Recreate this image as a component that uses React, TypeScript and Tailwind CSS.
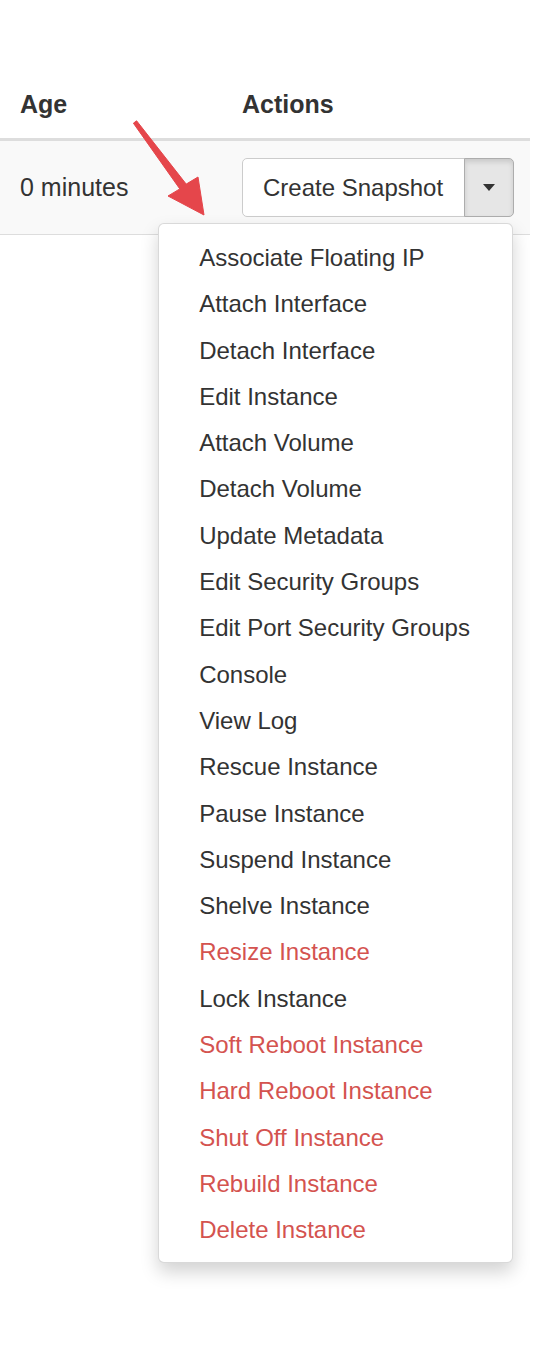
import React from 'react';

type Action = { label: string; danger?: boolean };

const actions: Action[] = [
  { label: 'Associate Floating IP' },
  { label: 'Attach Interface' },
  { label: 'Detach Interface' },
  { label: 'Edit Instance' },
  { label: 'Attach Volume' },
  { label: 'Detach Volume' },
  { label: 'Update Metadata' },
  { label: 'Edit Security Groups' },
  { label: 'Edit Port Security Groups' },
  { label: 'Console' },
  { label: 'View Log' },
  { label: 'Rescue Instance' },
  { label: 'Pause Instance' },
  { label: 'Suspend Instance' },
  { label: 'Shelve Instance' },
  { label: 'Resize Instance', danger: true },
  { label: 'Lock Instance' },
  { label: 'Soft Reboot Instance', danger: true },
  { label: 'Hard Reboot Instance', danger: true },
  { label: 'Shut Off Instance', danger: true },
  { label: 'Rebuild Instance', danger: true },
  { label: 'Delete Instance', danger: true },
];

const Arrow = () => (
  <svg
    className="absolute left-0 top-0 pointer-events-none"
    width="546"
    height="300"
    viewBox="0 0 546 300"
  >
    <polygon
      points="133.4,123.2 136.6,120.8 186.2,184.1 198,177 204,215 168,196 179.8,188.9"
      fill="#e5464b"
      stroke="#e5464b"
      strokeWidth="1"
      strokeLinejoin="round"
    />
  </svg>
);

export default function App() {
  return (
    <div
      className="relative w-[546px] h-[1346px] bg-white text-[#333] overflow-hidden"
      style={{ fontFamily: '"Liberation Sans", Arial, sans-serif' }}
    >
      <div className="pt-[70px] w-[530px]">
        {/* Header */}
        <div className="grid grid-cols-[222px_1fr] border-b-[3px] border-[#ddd]">
          <div className="px-5 py-[17px] text-[25px] leading-[34px] font-bold">Age</div>
          <div className="px-5 py-[17px] text-[25px] leading-[34px] font-bold">Actions</div>
        </div>

        {/* Row */}
        <div className="grid grid-cols-[222px_1fr] bg-[#f9f9f9] border-b border-[#ddd]">
          <div className="px-5 py-[17px] flex items-center text-[25px]">0 minutes</div>
          <div className="px-5 py-[17px]">
            <div className="relative inline-flex h-[59px]">
              <button className="h-full pl-[20px] pr-[21px] bg-white border border-[#ccc] rounded-l-[5px] text-[24px] text-[#333] whitespace-nowrap">
                Create Snapshot
              </button>
              <button className="h-full w-[50px] -ml-px flex items-center justify-center bg-[#e6e6e6] border border-[#adadad] rounded-r-[5px] shadow-[inset_0_3px_5px_rgba(0,0,0,0.125)]">
                <span className="w-0 h-0 border-x-[6px] border-t-[7px] border-x-transparent border-t-[#333]" />
              </button>

              {/* Dropdown menu */}
              <ul className="absolute right-[1px] top-full mt-[6px] w-[355px] pt-[11px] pb-[8px] bg-white border border-[rgba(0,0,0,0.15)] rounded-[6px] shadow-[0_9px_18px_rgba(0,0,0,0.175)] z-10">
                {actions.map((a) => (
                  <li
                    key={a.label}
                    className={`pl-[40px] text-[24px] leading-[46.3px] whitespace-nowrap ${
                      a.danger ? 'text-[#d4534f]' : 'text-[#333]'
                    }`}
                  >
                    {a.label}
                  </li>
                ))}
              </ul>
            </div>
          </div>
        </div>
      </div>

      <Arrow />
    </div>
  );
}
